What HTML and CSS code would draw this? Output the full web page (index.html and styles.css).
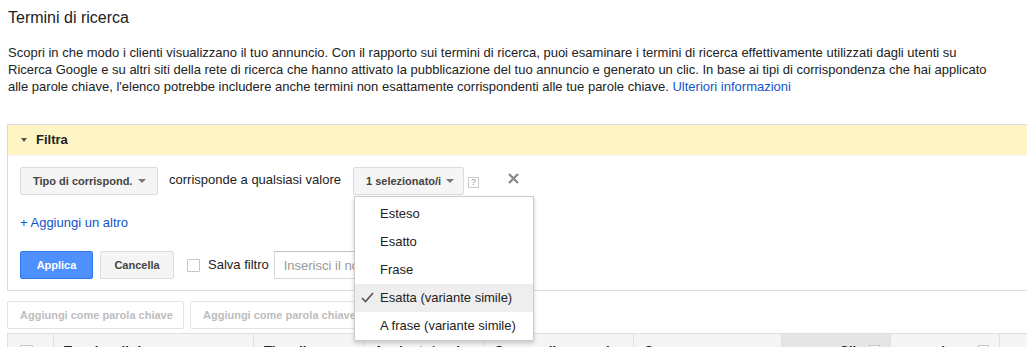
FILE: index.html
```html
<!DOCTYPE html>
<html>
<head lang="it">
  <meta charset="UTF-8">
  <title>Termini di ricerca</title>
  <link rel="stylesheet" href="styles.css">
</head>
<body>

<div class="page">
  <!-- intestazione -->
  <h1 class="title">Termini di ricerca</h1>
  <p class="intro">Scopri in che modo i clienti visualizzano il tuo annuncio. Con il rapporto sui termini di ricerca, puoi esaminare i termini di ricerca effettivamente utilizzati dagli utenti su Ricerca Google e su altri siti della rete di ricerca che hanno attivato la pubblicazione del tuo annuncio e generato un clic. In base ai tipi di corrispondenza che hai applicato alle parole chiave, l'elenco potrebbe includere anche termini non esattamente corrispondenti alle tue parole chiave. <a href="#">Ulteriori informazioni</a></p>

  <!-- pannello filtro -->
  <div class="filter">
    <div class="filter-head"><span class="tri"></span>Filtra</div>
    <div class="filter-body">
      <div class="cond">
        <button class="btn drop drop-type">Tipo di corrispond.<span class="caret"></span></button>
        <span class="cond-text">corrisponde a qualsiasi valore</span>
        <div class="picker">
          <button class="btn drop drop-sel">1 selezionato/i<span class="caret"></span></button>
          <ul class="menu">
            <li>Esteso</li>
            <li>Esatto</li>
            <li>Frase</li>
            <li class="on">
              <svg class="check" width="13" height="11" viewBox="0 0 13 11"><path d="M1 6 L4.5 9.5 L12 1" fill="none" stroke="#555" stroke-width="1.6"/></svg>
              Esatta (variante simile)
            </li>
            <li>A frase (variante simile)</li>
          </ul>
        </div>
        <span class="help">?</span>
        <svg class="remove" width="11" height="11" viewBox="0 0 11 11"><path d="M1 1 L10 10 M10 1 L1 10" stroke="#8a8a8a" stroke-width="2.4"/></svg>
      </div>
      <a class="add" href="#">+ Aggiungi un altro</a>
      <div class="actions">
        <button class="btn primary">Applica</button>
        <button class="btn">Cancella</button>
        <label class="save"><span class="box"></span>Salva filtro</label>
        <input class="name" type="text" placeholder="Inserisci il nome del filtro">
      </div>
    </div>
  </div>

  <!-- barra azioni -->
  <div class="toolbar">
    <button class="btn ghost">Aggiungi come parola chiave</button>
    <button class="btn ghost">Aggiungi come parola chiave esclusa</button>
  </div>

  <!-- intestazione tabella -->
  <div class="thead">
    <div class="th th-check"><span class="box"></span></div>
    <div class="th">Termine di ricerca</div>
    <div class="th">Tipo di corr.</div>
    <div class="th">Aggiunto/escluso</div>
    <div class="th">Gruppo di annunci</div>
    <div class="th">Campagna</div>
    <div class="th th-num th-sort">Clic <span class="qm"></span></div>
    <div class="th th-num">Impr. <span class="qm"></span></div>
    <div class="th th-num">CTR</div>
  </div>
</div>

</body>
</html>
```

FILE: styles.css
```css
* {
  margin: 0;
  padding: 0;
  box-sizing: border-box;
}

html, body {
  width: 100%;
  height: 100%;
  overflow: hidden;
}

body {
  font-family: "Liberation Sans", Arial, sans-serif;
  font-size: 13px;
  color: #222;
  background: #fff;
}

a {
  color: #15c;
  text-decoration: none;
}

li {
  list-style: none;
}

.page {
  padding: 8px 0 0 7px;
}

.title {
  font-size: 16px;
  font-weight: normal;
  line-height: 20px;
  padding-left: 1px;
}

.intro {
  width: 986px;
  margin-top: 16px;
  padding-left: 1px;
  line-height: 17px;
}

/* pannello filtro */
.filter {
  margin-top: 29px;
  margin-right: -20px;
  border: 1px solid #dcdcdc;
}

.filter-head {
  height: 30px;
  line-height: 30px;
  padding-left: 13px;
  background: #fff5c4;
  font-weight: bold;
  color: #222;
  display: flex;
  align-items: center;
  box-shadow: 0 1px 2px rgba(0, 0, 0, .04);
}

.tri {
  width: 0;
  height: 0;
  border-left: 3px solid transparent;
  border-right: 3px solid transparent;
  border-top: 4px solid #555;
  margin-right: 9px;
}

.filter-body {
  padding: 12px 12px 11px;
}

.btn {
  font-family: "Liberation Sans", Arial, sans-serif;
  font-size: 11px;
  font-weight: bold;
  color: #444;
  height: 28px;
  padding: 0 12px;
  background: #f5f5f5;
  border: 1px solid #dcdcdc;
  border-radius: 2px;
  white-space: nowrap;
  cursor: pointer;
}

.cond {
  display: flex;
  align-items: center;
  height: 28px;
}

.drop {
  display: flex;
  align-items: center;
  justify-content: space-between;
  padding: 0 11px 0 12px;
}

.drop-type {
  width: 138px;
}

.drop-sel {
  width: 111px;
  padding-left: 12px;
}

.caret {
  width: 0;
  height: 0;
  border-left: 4px solid transparent;
  border-right: 4px solid transparent;
  border-top: 4px solid #777;
  margin-left: 5px;
}

.cond-text {
  margin: 0 12px 0 11px;
  padding-bottom: 3px;
}

.picker {
  position: relative;
}

.menu {
  position: absolute;
  top: 29px;
  left: 1px;
  width: 180px;
  padding-top: 3px;
  background: #fff;
  border: 1px solid rgba(0, 0, 0, .2);
  box-shadow: 0 2px 4px rgba(0, 0, 0, .2);
  z-index: 5;
}

.menu li {
  position: relative;
  height: 28px;
  line-height: 28px;
  padding-left: 25px;
  color: #222;
}

.menu li.on {
  background: #eee;
}

.check {
  position: absolute;
  left: 6px;
  top: 8px;
}

.help {
  width: 11px;
  height: 11px;
  margin: 2px 0 0 4px;
  border: 1px solid #ccc;
  font-size: 9px;
  line-height: 9px;
  text-align: center;
  color: #999;
}

.remove {
  margin: -5px 0 0 29px;
}

.add {
  display: block;
  margin-top: 19px;
  line-height: 18px;
  width: max-content;
}

.actions {
  display: flex;
  align-items: center;
  margin-top: 19px;
  height: 28px;
}

.primary {
  width: 73px;
  background: #4d90fe;
  border-color: #3079ed;
  color: #fff;
}

.actions .btn + .btn {
  width: 74px;
  margin-left: 7px;
}

.save {
  display: flex;
  align-items: center;
  margin-left: 13px;
  padding-bottom: 2px;
}

.box {
  display: inline-block;
  width: 13px;
  height: 13px;
  border: 1px solid #c6c6c6;
  border-radius: 1px;
  background: #fff;
}

.save .box {
  margin: 3px 8px 0 0;
}

.name {
  margin-left: 5px;
  width: 240px;
  height: 28px;
  padding: 0 9px;
  border: 1px solid #d9d9d9;
  border-top-color: #c0c0c0;
  font-family: "Liberation Sans", Arial, sans-serif;
  font-size: 13px;
}

.name::placeholder {
  color: #999;
}

/* barra azioni */
.toolbar {
  display: flex;
  gap: 6px;
  margin-top: 10px;
}

.ghost {
  width: 177px;
  background: #fff;
  border-color: #e3e3e3;
  color: #bdbdbd;
  padding: 0 12px;
  text-align: left;
  overflow: hidden;
}

.ghost + .ghost {
  width: 230px;
}

/* intestazione tabella */
.thead {
  display: grid;
  grid-template-columns: 46px 200px 110px 120px 150px 148px 109px 109px 120px;
  margin-top: 4px;
  height: 40px;
  border-top: 1px solid #e0e0e0;
  border-left: 1px solid #e0e0e0;
  background: #f5f5f5;
}

.th {
  padding: 9px 0 0 10px;
  border-right: 1px solid #e0e0e0;
  font-size: 13px;
  font-weight: bold;
  color: #222;
  white-space: nowrap;
  overflow: hidden;
}

.th-check {
  padding: 11px 0 0 12px;
}

.th-num {
  text-align: right;
  padding: 9px 10px 0 0;
}

.th-sort {
  background: #e6e6e6;
}

.qm {
  display: inline-block;
  width: 11px;
  height: 11px;
  border: 1px solid #c6c6c6;
  background: #fff;
  vertical-align: -1px;
  margin-left: 2px;
}
```
